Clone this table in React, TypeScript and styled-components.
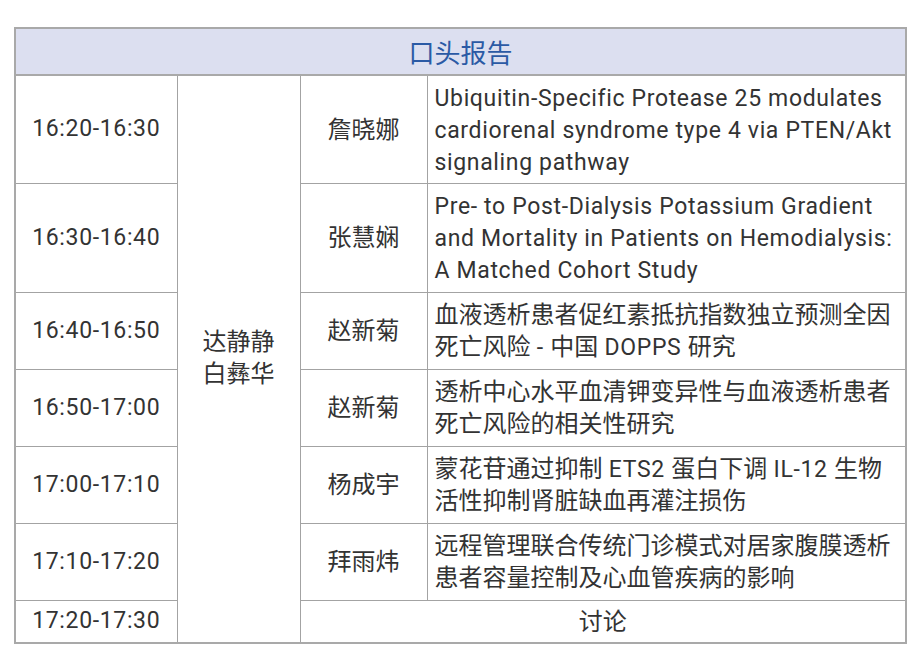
import styled, { createGlobalStyle } from "styled-components";

const GlobalStyle = createGlobalStyle`
  html, body {
    margin: 0;
    padding: 0;
    background: #ffffff;
  }
  body {
    font-family: "Noto Sans CJK SC", sans-serif;
    color: #333333;
  }
`;

interface Talk {
  time: string;
  speaker: string;
  title: string[];
  height: number;
}

const talks: Talk[] = [
  {
    time: "16:20-16:30",
    speaker: "詹晓娜",
    title: [
      "Ubiquitin-Specific Protease 25 modulates",
      "cardiorenal syndrome type 4 via PTEN/Akt",
      "signaling pathway",
    ],
    height: 108,
  },
  {
    time: "16:30-16:40",
    speaker: "张慧娴",
    title: [
      "Pre- to Post-Dialysis Potassium Gradient",
      "and Mortality in Patients on Hemodialysis:",
      "A Matched Cohort Study",
    ],
    height: 109,
  },
  {
    time: "16:40-16:50",
    speaker: "赵新菊",
    title: ["血液透析患者促红素抵抗指数独立预测全因", "死亡风险 - 中国 DOPPS 研究"],
    height: 77,
  },
  {
    time: "16:50-17:00",
    speaker: "赵新菊",
    title: ["透析中心水平血清钾变异性与血液透析患者", "死亡风险的相关性研究"],
    height: 77,
  },
  {
    time: "17:00-17:10",
    speaker: "杨成宇",
    title: ["蒙花苷通过抑制 ETS2 蛋白下调 IL-12 生物", "活性抑制肾脏缺血再灌注损伤"],
    height: 77,
  },
  {
    time: "17:10-17:20",
    speaker: "拜雨炜",
    title: ["远程管理联合传统门诊模式对居家腹膜透析", "患者容量控制及心血管疾病的影响"],
    height: 77,
  },
];

// latin runs are set a little smaller than the CJK text around them
const Mixed = ({ text }: { text: string }) => {
  const parts = text.split(/([\x20-\x7e]+)/g).filter((p) => p !== "");
  return (
    <>
      {parts.map((p, i) =>
        /^[\x20-\x7e]+$/.test(p) ? <Latin key={i}>{p}</Latin> : <span key={i}>{p}</span>
      )}
    </>
  );
};

export default function App() {
  return (
    <>
      <GlobalStyle />
      <Page>
        <Table>
          <colgroup>
            <col style={{ width: 162 }} />
            <col style={{ width: 123 }} />
            <col style={{ width: 127 }} />
            <col />
          </colgroup>
          <tbody>
            <HeaderRow>
              <HeaderCell colSpan={4}>口头报告</HeaderCell>
            </HeaderRow>
            {talks.map((t, i) => (
              <Row key={i} $h={t.height}>
                <TimeCell>
                  <Latin>{t.time}</Latin>
                </TimeCell>
                {i === 0 && (
                  <ChairCell rowSpan={7}>
                    <ChairLine>达静静</ChairLine>
                    <ChairLine>白彝华</ChairLine>
                  </ChairCell>
                )}
                <SpeakerCell>{t.speaker}</SpeakerCell>
                <TitleCell>
                  {t.title.map((line, j) => (
                    <TitleLine key={j}>
                      <Mixed text={line} />
                    </TitleLine>
                  ))}
                </TitleCell>
              </Row>
            ))}
            <Row $h={43}>
              <TimeCell>
                <Latin>17:20-17:30</Latin>
              </TimeCell>
              <SpeakerCell colSpan={2}>讨论</SpeakerCell>
            </Row>
          </tbody>
        </Table>
      </Page>
    </>
  );
}

const Page = styled.div`
  padding: 27px 13px 0 14px;
`;

const Table = styled.table`
  width: 893px;
  border-collapse: collapse;
  table-layout: fixed;
  border: 2px solid #a9a9a9;
  font-size: 24px;
  line-height: 32px;
  color: #333333;
`;

const HeaderRow = styled.tr`
  height: 47px;
`;

const HeaderCell = styled.td`
  background: #dcdff0;
  color: #2b5aa5;
  font-size: 26px;
  text-align: center;
  vertical-align: middle;
  padding: 0;
  border: 2px solid #a9a9a9;
`;

const Row = styled.tr<{ $h: number }>`
  height: ${({ $h }) => $h}px;
`;

const Cell = styled.td`
  border: 1.5px solid #a3a3a3;
  padding: 0 0 3px;
  vertical-align: middle;
`;

const TimeCell = styled(Cell)`
  text-align: center;
`;

const ChairCell = styled(Cell)`
  text-align: center;
  padding-bottom: 6px;
`;

const ChairLine = styled.div`
  height: 32px;
  line-height: 32px;
`;

const SpeakerCell = styled(Cell)`
  text-align: center;
`;

const TitleCell = styled(Cell)`
  padding: 0 4px 3px 7px;
  white-space: nowrap;
`;

const TitleLine = styled.div`
  height: 32px;
`;

const Latin = styled.span`
  font-family: Roboto, "Noto Sans CJK SC", sans-serif;
  font-size: 23px;
  letter-spacing: 0.65px;
`;
